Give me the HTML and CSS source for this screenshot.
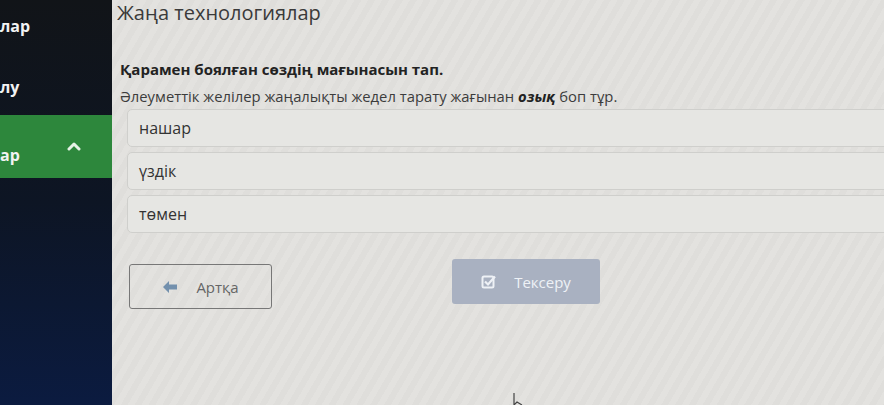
FILE: index.html
```html
<!DOCTYPE html>
<html lang="kk">
<head>
  <meta charset="UTF-8" />
  <title>Жаңа технологиялар</title>
  <link rel="stylesheet" href="styles.css">
</head>
<body>

  <nav class="sidebar">
    <div class="nav-item first"><span>лар</span></div>
    <div class="nav-item second"><span>лу</span></div>
    <div class="nav-item active">
      <span>ар</span>
      <svg class="chevron" width="14" height="10" viewBox="0 0 14 10"><path d="M2 8 L7 3 L12 8" fill="none" stroke="#e6f2e6" stroke-width="3" stroke-linecap="round" stroke-linejoin="round"/></svg>
    </div>
  </nav>

  <main class="content">
    <h1 class="title">Жаңа технологиялар</h1>

    <p class="question">Қарамен боялған сөздің мағынасын тап.</p>
    <p class="sentence">Әлеуметтік желілер жаңалықты жедел тарату жағынан <b><i>озық</i></b> боп тұр.</p>

    <div class="options">
      <div class="option">нашар</div>
      <div class="option">үздік</div>
      <div class="option">төмен</div>
    </div>

    <div class="actions">
      <button class="btn back">
        <svg width="16" height="14" viewBox="0 0 16 14"><path d="M1 7 L7 1 L7 4.5 L15 4.5 L15 9.5 L7 9.5 L7 13 Z" fill="#7390ad"/></svg>
        Артқа
      </button>
      <button class="btn check">
        <svg width="15" height="15" viewBox="0 0 15 15"><rect x="1.5" y="2.5" width="11" height="11" rx="1.5" fill="none" stroke="#eef1f6" stroke-width="2"/><path d="M4 7.5 L7 10.5 L14 2.5" fill="none" stroke="#eef1f6" stroke-width="2.2"/></svg>
        Тексеру
      </button>
    </div>
  </main>

  <svg class="cursor" width="16" height="14" viewBox="0 0 16 14"><path d="M1 1 L1 13 L4 10 L9 13" fill="none" stroke="#444" stroke-width="1.2"/></svg>

</body>
</html>
```

FILE: styles.css
```css
body {
  margin: 0;
  width: 884px;
  height: 405px;
  overflow: hidden;
  display: flex;
  font-family: "Open Sans", "Noto Sans", sans-serif;
  background: #e1e0dd;
  position: relative;
}
.sidebar {
  width: 112px;
  flex-shrink: 0;
  background: linear-gradient(to bottom, #111418 0%, #0d1524 50%, #0b1b40 100%);
  display: flex;
  flex-direction: column;
}
.nav-item {
  height: 63px;
  display: flex;
  align-items: center;
  color: #f2f2f2;
  font-weight: bold;
  font-size: 16px;
  position: relative;
}
.nav-item.first {
  height: 52px;
}
.nav-item.second {
  padding-top: 6px;
  height: 57px;
}
.nav-item.active {
  background: #2d873c;
  padding-top: 16px;
  height: 47px;
}
.chevron {
  position: absolute;
  left: 67px;
  top: 26px;
}
.content {
  flex: 1;
  padding-left: 5px;
  overflow: hidden;
  background: repeating-linear-gradient(120deg, #e3e2df 0px, #e3e2df 6px, #dfdedb 6px, #dfdedb 12px);
}
.title {
  font-size: 20px;
  font-weight: normal;
  color: #3a3a3a;
  line-height: 26px;
  margin: 0;
}
.question {
  font-size: 15px;
  font-weight: bold;
  color: #222;
  margin: 33px 0 0 3px;
  line-height: 20px;
}
.sentence {
  font-size: 14.8px;
  color: #3c3c3c;
  margin: 7px 0 0 3px;
  line-height: 20px;
}
.sentence b {
  color: #222;
}
.options {
  margin: 3px -12px 0 10px;
  display: flex;
  flex-direction: column;
  gap: 5px;
}
.option {
  height: 36px;
  display: flex;
  align-items: center;
  padding-left: 11px;
  font-size: 16px;
  color: #333;
  background: #e6e6e3;
  border: 1px solid #cfcfcc;
  border-radius: 5px;
}
.actions {
  display: flex;
  align-items: flex-start;
  gap: 180px;
  margin: 26px 0 0 12px;
}
.btn {
  height: 45px;
  width: 143px;
  display: flex;
  align-items: center;
  justify-content: center;
  gap: 18px;
  font-family: "Open Sans", "Noto Sans", sans-serif;
  font-size: 15px;
  border-radius: 3px;
  cursor: pointer;
}
.back {
  margin-top: 5px;
  background: transparent;
  color: #666;
  border: 1px solid #777;
}
.check {
  width: 148px;
  background: #a9b1c1;
  color: #eef1f6;
  border: none;
}
.cursor {
  position: absolute;
  left: 513px;
  top: 392px;
}
```
